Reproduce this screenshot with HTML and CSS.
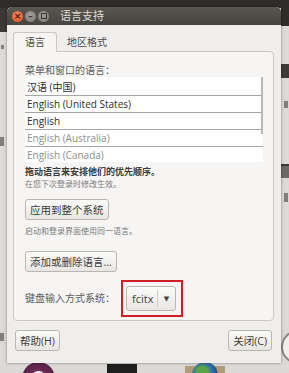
FILE: index.html
```html
<!DOCTYPE html>
<html lang="zh-CN">
<head>
    <meta charset="UTF-8">
    <title>语言支持</title>
    <link rel="stylesheet" href="styles.css">
</head>
<body>

    <!-- Ce qu'on voit du bureau derriere la fenetre -->
    <div class="bureau">
        <div class="barreHaut"></div>
        <div class="coinGauche"></div>
        <span class="marque marqueG1"></span>
        <span class="marque marqueG2"></span>
        <span class="marque marqueG3"></span>
        <div class="bandeDroite bande1"></div>
        <div class="bandeDroite bande2"></div>
        <div class="bandeDroite bande3"></div>
        <span class="marque marqueD1"></span>
        <span class="marque marqueD2"></span>
        <div class="horloge"></div>
        <div class="iconeDock violet"></div>
        <div class="iconeDock noir"></div>
        <div class="iconeDock boite"></div>
        <div class="iconeDock globe"></div>
    </div>

    <div class="fenetre">

        <div class="barreTitre">
            <span class="rond fermer">&#215;</span>
            <span class="rond">&#8211;</span>
            <span class="rond carre"></span>
            <span class="titre">语言支持</span>
        </div>

        <div class="corps">

            <div class="onglets">
                <span class="onglet actif">语言</span>
                <span class="onglet">地区格式</span>
            </div>

            <div class="panneau">

                <p class="etiquette">菜单和窗口的语言：</p>

                <ul class="liste">
                    <li>汉语 (中国)</li>
                    <li>English (United States)</li>
                    <li>English</li>
                    <li class="inactif">English (Australia)</li>
                    <li class="inactif">English (Canada)</li>
                    <span class="ascenseur"></span>
                </ul>

                <p class="aideGras">拖动语言来安排他们的优先顺序。</p>
                <p class="aide">在您下次登录时修改生效。</p>

                <button class="bouton boutonAppliquer">应用到整个系统</button>
                <p class="aide aideSysteme">启动和登录界面使用同一语言。</p>

                <button class="bouton boutonLangues">添加或删除语言...</button>

                <div class="ligneClavier">
                    <span class="etiquette">键盘输入方式系统：</span>
                    <div class="cadreRouge">
                        <div class="combo">
                            <span class="comboTexte">fcitx</span>
                            <span class="comboFleche">&#9660;</span>
                        </div>
                    </div>
                </div>

            </div>

            <div class="boutonsBas">
                <button class="bouton">帮助(H)</button>
                <button class="bouton">关闭(C)</button>
            </div>

        </div>
    </div>

</body>
</html>
```

FILE: styles.css
```css
/* Generalites */
html, body { margin: 0; padding: 0; }
body
{
    width: 289px;
    height: 373px;
    overflow: hidden;
    position: relative;
    background-color: #dcdad7;
    font-family: "Open Sans", "Noto Sans CJK SC", sans-serif;
}

/* Bureau derriere */
.bureau { position: absolute; left: 0; top: 0; width: 289px; height: 373px; overflow: hidden; }
.barreHaut { position: absolute; left: 0; top: 0; width: 289px; height: 8px; background-color: #2e2d2b; }
.coinGauche { position: absolute; left: 0; top: 8px; width: 8px; height: 24px; background-color: #3a3936; }
.marque { position: absolute; width: 4px; height: 7px; background-color: #5a5957; opacity: 0.7; }
.marqueG1 { left: 1px; top: 45px; width: 3px; height: 4px; }
.marqueG2 { left: 0; top: 137px; height: 9px; }
.marqueG3 { left: 0; top: 333px; height: 8px; }
.marqueD1 { left: 284px; top: 101px; }
.marqueD2 { left: 284px; top: 193px; height: 9px; }
.bandeDroite { position: absolute; left: 281px; width: 8px; background-color: #3c3b39; }
.bande1 { top: 8px; height: 18px; background-color: #2e2d2b; }
.bande2 { top: 64px; height: 14px; }
.bande3 { top: 164px; height: 12px; background-color: #6a6966; border-top: 2px solid #3c3b39; }
.horloge
{
    position: absolute; left: 281px; top: 330px;
    width: 30px; height: 30px;
    border: 2px solid #8a8885; border-radius: 50%;
    background-color: #f0efee;
}
.iconeDock { position: absolute; }
.violet
{
    left: 22px; top: 362px; width: 33px; height: 33px;
    border-radius: 50%;
    background: radial-gradient(circle, #f2eef0 30%, #6b2d55 34%, #5a2248 70%);
}
.noir { left: 107px; top: 364px; width: 30px; height: 9px; background-color: #1e1e1e; }
.boite { left: 185px; top: 366px; width: 40px; height: 7px; background-color: #b19b78; }
.globe
{
    left: 192px; top: 362px; width: 26px; height: 26px; border-radius: 50%;
    background: radial-gradient(circle at 40% 40%, #5aa44a 0 25%, #2f6fb0 45%, #1f4f86 70%);
}

/* Fenetre */
.fenetre
{
    position: absolute;
    left: 7px;
    top: 7px;
    width: 274px;
    height: 356px;
    border-radius: 5px 5px 0 0;
    background-color: #efeeed;
    box-shadow: 0 0 3px rgba(0, 0, 0, 0.45);
    overflow: hidden;
}

.barreTitre
{
    height: 18px;
    display: flex;
    align-items: center;
    padding-left: 5px;
    background: linear-gradient(#5a5750, #46443f);
}
.rond
{
    width: 11px;
    height: 11px;
    margin-right: 2px;
    border-radius: 50%;
    display: flex;
    align-items: center;
    justify-content: center;
    background: radial-gradient(circle at 45% 35%, #a09e97, #7a7872);
    color: #3a3834;
    font-size: 9px;
    line-height: 9px;
    font-weight: 700;
    font-family: "DejaVu Sans", sans-serif;
}
.fermer { background: radial-gradient(circle at 45% 35%, #f58a5c, #de4a1f); color: #4a1a0a; }
.carre::after { content: ""; width: 4px; height: 4px; border: 1px solid #3a3834; }
.titre { margin-left: 9px; color: #e0ddd5; font-size: 11px; line-height: 18px; }

.corps { padding: 7px 7px 0 6px; }

/* Onglets */
.onglets { display: flex; height: 20px; }
.onglet
{
    padding: 0 10px;
    font-size: 10px;
    line-height: 20px;
    color: #4a4a4a;
}
.actif
{
    padding: 0 11px;
    line-height: 19px;
    border: 1px solid #cbc7c2;
    border-bottom: none;
    border-radius: 3px 3px 0 0;
    background-color: #f6f5f4;
    position: relative;
    z-index: 1;
}

.panneau
{
    margin-top: -1px;
    border: 1px solid #cbc7c2;
    border-radius: 0 4px 4px 4px;
    background-color: #f6f5f4;
    padding: 12px 10px 3px 11px;
}

.etiquette { margin: 0; font-size: 10px; line-height: 13px; color: #5c5c5c; }

/* Liste des langues */
.liste
{
    margin: 0;
    padding: 2px 0 0 0;
    list-style: none;
    width: 238px;
    height: 85px;
    box-sizing: border-box;
    overflow: hidden;
    position: relative;
    background-color: #ffffff;
}
.liste li
{
    height: 16px;
    line-height: 16px;
    padding-left: 2px;
    border-bottom: 1px solid #a6a6a6;
    font-size: 10px;
    color: #2e2e2e;
}
.liste li.inactif { color: #8e8e8e; }
.ascenseur { position: absolute; right: 0; top: 0; width: 2px; height: 57px; background-color: #b8b8b8; }

.aideGras { margin: 4px 0 0 0; font-size: 9px; line-height: 12px; font-weight: 700; color: #3a3a3a; }
.aide { margin: 0; font-size: 8px; line-height: 11px; color: #7a7a7a; }
.aideSysteme { margin-top: 5px; }

/* Boutons */
.bouton
{
    display: block;
    height: 21px;
    padding: 0 4px;
    box-sizing: border-box;
    border: 1px solid #bab6b0;
    border-radius: 3px;
    background: linear-gradient(#fbfbfa, #e8e6e3);
    color: #3c3c3c;
    font-family: inherit;
    font-size: 10.5px;
}
.boutonAppliquer { margin-top: 10px; }
.boutonLangues { margin-top: 15px; }

.ligneClavier { display: flex; align-items: center; margin-top: 8px; }
.ligneClavier .etiquette { margin-right: 6px; }
.cadreRouge { border: 2px solid #cf1f26; padding: 4px 5px 4px 3px; }
.combo
{
    display: flex;
    align-items: center;
    width: 50px;
    height: 25px;
    box-sizing: border-box;
    border: 1px solid #bab6b0;
    border-radius: 3px;
    background: linear-gradient(#fbfbfa, #e8e6e3);
}
.comboTexte { padding-left: 5px; width: 25px; font-size: 11px; color: #444; border-right: 1px solid #d2cec9; line-height: 17px; }
.comboFleche { flex: 1; text-align: center; font-size: 7px; color: #444; font-family: "DejaVu Sans", sans-serif; }

.boutonsBas { display: flex; justify-content: space-between; padding: 0 2px; margin-top: 9px; }
```
